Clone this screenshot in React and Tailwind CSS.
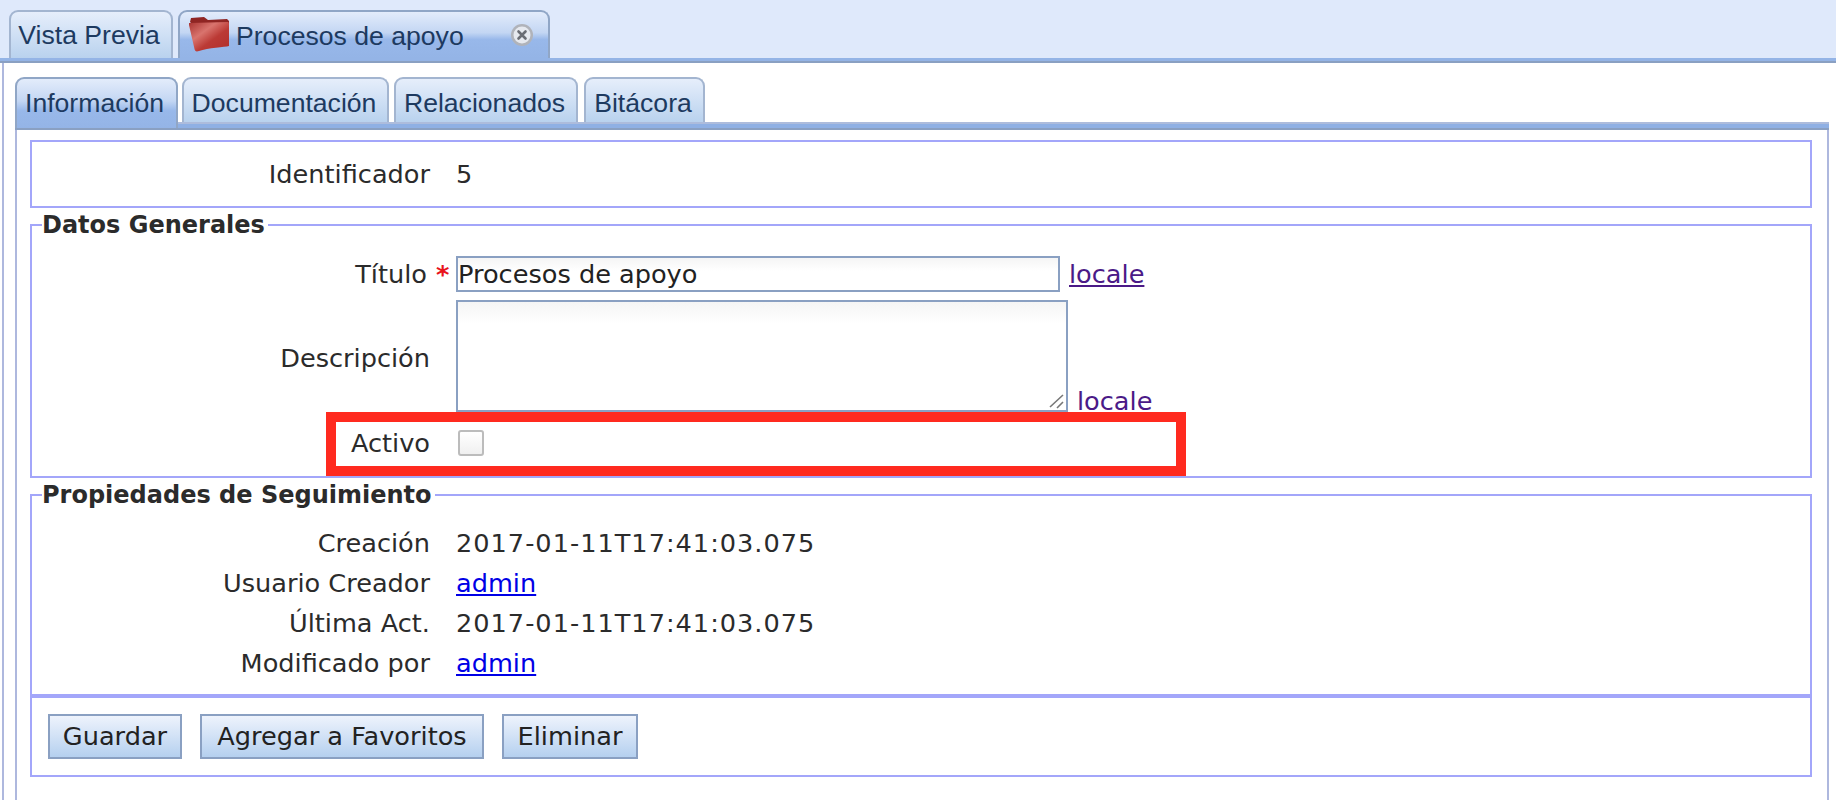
const dejavu = "font-['DejaVu_Sans',sans-serif]"

function FolderIcon() {
  return (
    <svg width="42" height="36" viewBox="0 0 42 36" className="mb-[3px] shrink-0">
      <defs>
        <linearGradient id="folderFace" x1="0" y1="0" x2="1" y2="1">
          <stop offset="0" stopColor="#a83230" />
          <stop offset="0.35" stopColor="#d9746e" />
          <stop offset="0.6" stopColor="#bb3a35" />
          <stop offset="1" stopColor="#b02e2b" />
        </linearGradient>
      </defs>
      <path d="M2 6 L3 2 L16 1 L20 4 L39 3 L41 5 L41 10 L8 12 Z" fill="#8f2523" />
      <path d="M1 7 L40 6 C41 6 41 8 41 9 L41 30 C37 31 20 32 11 35 C8 36 7 35 6.5 33 L1 9 Z" fill="url(#folderFace)" />
    </svg>
  )
}

function CloseIcon() {
  return (
    <svg width="24" height="24" viewBox="0 0 24 24" className="shrink-0">
      <circle cx="12" cy="12" r="11" fill="#b0b3ba" />
      <circle cx="12" cy="12" r="8.5" fill="#e6e9ef" />
      <path d="M8.5 8.5 L15.5 15.5 M15.5 8.5 L8.5 15.5" stroke="#6a6d74" strokeWidth="2.6" strokeLinecap="round" />
    </svg>
  )
}

function Row({ label, children, required }) {
  return (
    <>
      <div className={`relative text-right text-[#2b2b2b] ${required ? 'pr-[3px]' : ''}`}>
        {label}
        {required && <span className="absolute left-[100%] top-0 ml-[6px] font-bold text-[#e8141c]">*</span>}
      </div>
      <div className="whitespace-nowrap text-[#2b2b2b]">{children}</div>
    </>
  )
}

function AdminLink() {
  return <a href="#admin" className="text-[#0000e6] underline">admin</a>
}

function Stamp() {
  return <span className="tracking-[1px]">2017-01-11T17:41:03.075</span>
}

function Button({ children, width }) {
  return (
    <button className={`h-[45px] ${width} border-2 border-[#8aa0c2] bg-gradient-to-b from-[#eef3fc] to-[#b5d0ef] text-[25.6px] leading-none text-[#222]`}>
      {children}
    </button>
  )
}

const idleTab = 'flex h-[45px] items-center justify-center rounded-t-[9px] border-2 border-b-0 border-[#a3b5d0] bg-gradient-to-b from-[#e6eefb] to-[#b9d2ee] pr-[3px] pt-[6px]'

export default function App() {
  return (
    <div className={`h-[800px] w-[1836px] overflow-hidden bg-white ${dejavu} text-[25.6px]`}>
      {/* top tabs */}
      <div className="flex h-[58px] items-end gap-[5px] bg-[#dfe9fb] pl-[9px] font-['Liberation_Sans',sans-serif] text-[26.6px] text-[#1d3a60]">
        <div className="flex h-[48px] w-[164px] items-center justify-center rounded-t-[9px] border-2 border-b-0 border-[#a3b5d0] bg-gradient-to-b from-[#e6eefb] to-[#b9d2ee] pr-[4px] pt-[2px]">
          Vista Previa
        </div>
        <div className="flex h-[48px] w-[372px] items-center rounded-t-[9px] border-2 border-b-0 border-[#90a6c6] bg-[linear-gradient(#e3ecfb,#c3d6f3_45%,#98b8ea_60%,#94b4e6)] pl-[8px]">
          <FolderIcon />
          <span className="ml-[6px] pt-[3px]">Procesos de apoyo</span>
          <span className="ml-auto mr-[14px]"><CloseIcon /></span>
        </div>
      </div>
      <div className="h-[5px] border-b-2 border-[#8aa0c2] bg-[#94b4e6]" />

      <div className="ml-[2px] h-[737px] border-l-2 border-[#aeb8de] pl-[11px] pt-[14px]">
        {/* inner tabs */}
        <div className="flex h-[45px] w-[1812px] items-end font-['Liberation_Sans',sans-serif] text-[26.6px] text-[#1d3a60]">
          <div className="z-10 -mb-[6px] flex h-[51px] w-[163px] items-center justify-center rounded-t-[9px] border-2 border-b-0 border-[#90a6c6] bg-[linear-gradient(#e3ecfb,#c3d6f3_45%,#98b8ea_65%,#94b4e6)] pr-[4px]">Información</div>
          <div className={`${idleTab} ml-[4px] w-[207px]`}>Documentación</div>
          <div className={`${idleTab} ml-[5px] w-[184px]`}>Relacionados</div>
          <div className={`${idleTab} ml-[6px] w-[121px]`}>Bitácora</div>
        </div>
        <div className="h-[8px] w-[1814px] border-b-2 border-t-2 border-b-[#8aa0c2] border-t-[#adbcdc] bg-[#8fb0e4]" />

        <div className="h-[670px] w-[1814px] border-x-2 border-[#aeb8de] px-[13px] pt-[10px]">
          {/* identifier */}
          <div className="grid h-[68px] w-[1782px] grid-cols-[398px_1fr] items-center gap-x-[26px] border-2 border-[#a3a6fa]">
            <Row label="Identificador">5</Row>
          </div>

          {/* general data */}
          <fieldset className="relative mt-[2px] h-[268px] w-[1782px] border-2 border-[#a3a6fa]">
            <legend className="ml-[10px] pr-[3px] text-[24px] font-bold leading-[30px] text-[#2b2b2b]">Datos Generales</legend>
            <div className="mt-[16px] grid grid-cols-[398px_1fr] gap-x-[26px]">
              <div className="flex h-[36px] items-center"><div className="w-full"><Row label="Título" required /></div></div>
              <div className="flex h-[36px] items-center">
                <input defaultValue="Procesos de apoyo" className="h-[36px] w-[604px] border-2 border-[#8aa0c2] bg-gradient-to-b from-[#f5f5f5] to-white to-40% px-0 text-[#222] outline-none" />
                <a href="#locale" className="ml-[9px] leading-[30px] text-[#4b1a87] underline">locale</a>
              </div>
              <div className="mt-[8px] flex h-[112px] items-center justify-end pt-[5px] text-[#2b2b2b]">Descripción</div>
              <div className="mt-[8px] flex items-end">
                <div className="relative h-[112px] w-[612px]">
                  <textarea className="block h-full w-full resize-none border-2 border-[#8aa0c2] bg-gradient-to-b from-[#f5f5f5] to-white to-20% outline-none" />
                  <svg width="16" height="16" viewBox="0 0 16 16" className="absolute bottom-[3px] right-[3px]">
                    <path d="M1 14 L14 2 M8 15 L14 9" stroke="#777" strokeWidth="1.6" fill="none" />
                  </svg>
                </div>
                <a href="#locale" className="-mb-[8px] ml-[9px] text-[#4b1a87]">locale</a>
              </div>
              <div className="mt-[12px] text-right text-[#2b2b2b]">Activo</div>
              <div className="mt-[18px]">
                <div className="ml-[2px] h-[26px] w-[26px] rounded-[3px] border-2 border-[#bcbcbc] bg-gradient-to-b from-white to-[#f0f0f0]" />
              </div>
            </div>
            {/* annotation */}
            <div className="absolute bottom-0 left-[294px] h-[64px] w-[860px] border-[10px] border-[#ff2a1f]" />
          </fieldset>

          {/* tracking */}
          <fieldset className="mt-[2px] h-[216px] w-[1782px] border-2 border-[#a3a6fa]">
            <legend className="ml-[10px] pr-[3px] text-[24px] font-bold leading-[30px] text-[#2b2b2b]">Propiedades de Seguimiento</legend>
            <div className="mt-[18px] grid grid-cols-[398px_1fr] gap-x-[26px] gap-y-[10px] leading-[30px]">
              <Row label="Creación"><Stamp /></Row>
              <Row label="Usuario Creador"><AdminLink /></Row>
              <Row label="Última Act."><Stamp /></Row>
              <Row label="Modificado por"><AdminLink /></Row>
            </div>
          </fieldset>

          {/* actions */}
          <div className="flex h-[81px] w-[1782px] items-start gap-[18px] border-2 border-[#a3a6fa] pl-[16px] pt-[16px]">
            <Button width="w-[134px]">Guardar</Button>
            <Button width="w-[284px]">Agregar a Favoritos</Button>
            <Button width="w-[136px]">Eliminar</Button>
          </div>
        </div>
      </div>
    </div>
  )
}
